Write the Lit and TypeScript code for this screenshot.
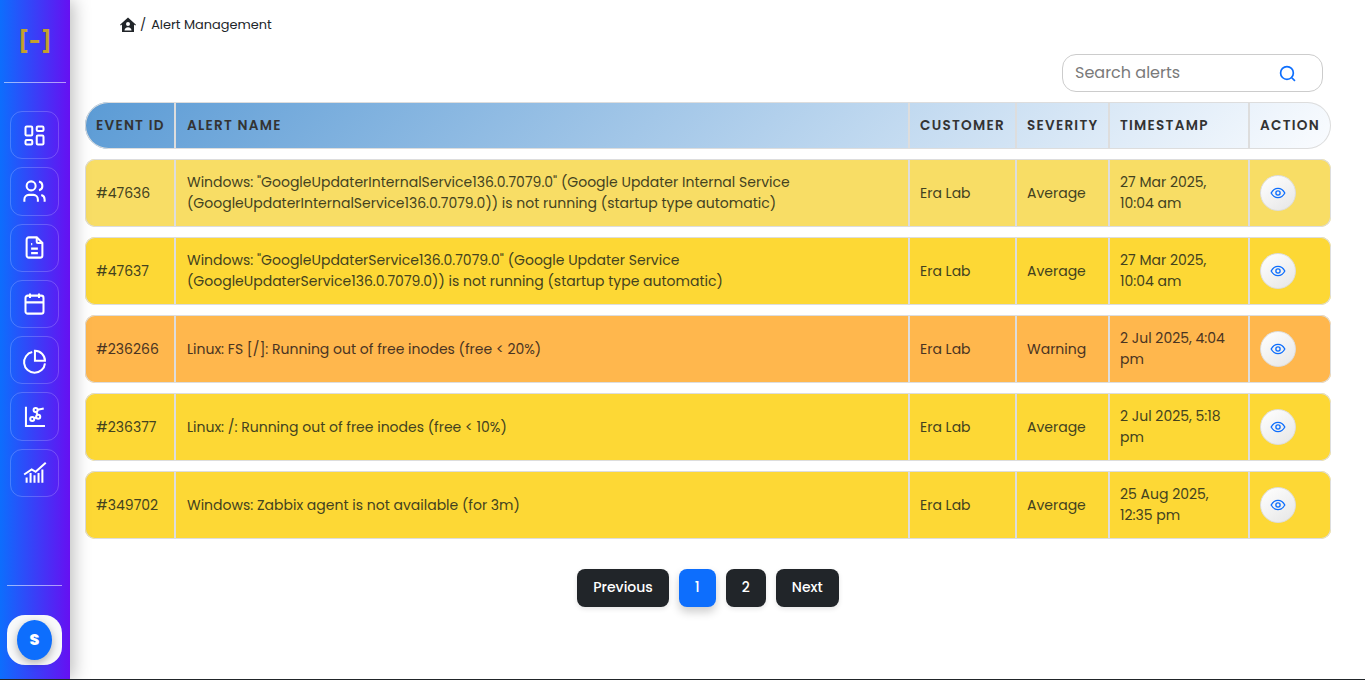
import { LitElement, html, css, svg } from "lit";
import { customElement } from "lit/decorators.js";

const navIcons = [
  svg`<path d="M5 4h4a1 1 0 0 1 1 1v6a1 1 0 0 1-1 1H5a1 1 0 0 1-1-1V5a1 1 0 0 1 1-1"/><path d="M5 16h4a1 1 0 0 1 1 1v2a1 1 0 0 1-1 1H5a1 1 0 0 1-1-1v-2a1 1 0 0 1 1-1"/><path d="M15 12h4a1 1 0 0 1 1 1v6a1 1 0 0 1-1 1h-4a1 1 0 0 1-1-1v-6a1 1 0 0 1 1-1"/><path d="M15 4h4a1 1 0 0 1 1 1v2a1 1 0 0 1-1 1h-4a1 1 0 0 1-1-1V5a1 1 0 0 1 1-1"/>`,
  svg`<circle cx="9" cy="7" r="4"/><path d="M3 21v-2a4 4 0 0 1 4-4h4a4 4 0 0 1 4 4v2"/><path d="M16 3.130a4 4 0 0 1 0 7.750"/><path d="M21 21v-2a4 4 0 0 0-3-3.850"/>`,
  svg`<path d="M14 3v4a1 1 0 0 0 1 1h4"/><path d="M17 21H7a2 2 0 0 1-2-2V5a2 2 0 0 1 2-2h7l5 5v11a2 2 0 0 1-2 2z"/><path d="M9 9h1M9 13h6M9 17h6"/>`,
  svg`<path d="M4 7a2 2 0 0 1 2-2h12a2 2 0 0 1 2 2v12a2 2 0 0 1-2 2H6a2 2 0 0 1-2-2V7z"/><path d="M16 3v4M8 3v4M4 11h16"/>`,
  svg`<path d="M10 4.500A9.300 9.300 0 1 0 21.300 14.500"/><path d="M12.400 3.400a8.800 8.800 0 0 1 8.900 8.800h-8.900z"/>`,
  svg`<path d="M4.400 3.300v17.100h16.900"/><circle cx="10" cy="14.200" r="1.800"/><circle cx="15.300" cy="12.200" r="1.800"/><circle cx="13" cy="6.300" r="1.800"/><path d="M11.700 13.600l1.900-.8M13.800 8l.8 2.500M14.800 6l5.400-1.200"/>`,
  svg`<path d="M2.800 13.800l6.700-4.500 3.500 2.100 9-8"/><path d="M5 21v-4.500M8.500 21v-8.500M12 21v-6.500M15.600 21v-8.500M19 21V9.300"/>`,
];

const eye = html`<svg class="eye" viewBox="0 0 24 24"><path d="M1.800 12S5.500 5 12 5s10.200 7 10.200 7-3.700 7-10.200 7S1.800 12 1.800 12z"/><circle cx="12" cy="12" r="3.200"/></svg>`;

type Row = { id: string; name: string; sev: string; time: string; tone: string };
const rows: Row[] = [
  { id: "#47636", name: 'Windows: "GoogleUpdaterInternalService136.0.7079.0" (Google Updater Internal Service (GoogleUpdaterInternalService136.0.7079.0)) is not running (startup type automatic)', sev: "Average", time: "27 Mar 2025, 10:04 am", tone: "pale" },
  { id: "#47637", name: 'Windows: "GoogleUpdaterService136.0.7079.0" (Google Updater Service (GoogleUpdaterService136.0.7079.0)) is not running (startup type automatic)', sev: "Average", time: "27 Mar 2025, 10:04 am", tone: "yellow" },
  { id: "#236266", name: "Linux: FS [/]: Running out of free inodes (free < 20%)", sev: "Warning", time: "2 Jul 2025, 4:04 pm", tone: "orange" },
  { id: "#236377", name: "Linux: /: Running out of free inodes (free < 10%)", sev: "Average", time: "2 Jul 2025, 5:18 pm", tone: "yellow" },
  { id: "#349702", name: "Windows: Zabbix agent is not available (for 3m)", sev: "Average", time: "25 Aug 2025, 12:35 pm", tone: "yellow" },
];

@customElement("app-root")
export class AppRoot extends LitElement {
  static styles = css`
    :host {
      display: flex;
      height: 680px;
      box-sizing: border-box;
      border-bottom: 1px solid #212529;
      overflow: hidden;
      background: #fff;
      color: #212529;
      font-family: "Poppins", "Inter", "Noto Sans", sans-serif;
    }
    * { box-sizing: border-box; }
    .side {
      width: 70px;
      flex: none;
      display: flex;
      flex-direction: column;
      align-items: center;
      background: linear-gradient(90deg, #0d6efd, #6610f2);
      box-shadow: 4px 0 16px rgba(0, 0, 0, .25);
      z-index: 1;
    }
    .logo {
      height: 83px;
      width: 62px;
      border-bottom: 1px solid rgba(255, 255, 255, .55);
      display: flex;
      align-items: center;
      justify-content: center;
      color: #c4a02c;
      font-weight: 700;
      font-size: 20.500px;
      letter-spacing: 0;
    }
    .nav {
      margin: 28px 1px 0 0;
      display: flex;
      flex-direction: column;
      gap: 8px;
    }
    .nav a {
      width: 49px;
      height: 48.250px;
      display: flex;
      align-items: center;
      justify-content: center;
      border: 1px solid rgba(255, 255, 255, .2);
      border-radius: 12px;
    }
    .nav svg {
      width: 27px;
      height: 27px;
      fill: none;
      stroke: #fff;
      stroke-width: 1.800;
    }
    .foot {
      margin: auto 1px 0 0;
      width: 55px;
      border-top: 1px solid rgba(255, 255, 255, .55);
      padding: 29px 0 14px;
    }
    .avatar-box {
      height: 50px;
      background: #f8f9fa;
      border-radius: 18px;
      display: flex;
      align-items: center;
      justify-content: center;
    }
    .avatar {
      width: 35px;
      height: 40px;
      padding-bottom: 2px;
      border-radius: 50%;
      background: #0d6efd;
      color: #fff;
      font-weight: 800;
      font-size: 16px;
      display: flex;
      align-items: center;
      justify-content: center;
      box-shadow: 0 3px 8px rgba(0, 0, 0, .3);
    }
    main {
      flex: 1;
      min-width: 0;
      padding: 15px 34px 0 15px;
      display: flex;
      flex-direction: column;
    }
    .crumb {
      display: flex;
      align-items: center;
      gap: 5px;
      height: 20px;
      padding-left: 35px;
      font-size: 12.900px;
      color: #212529;
    }
    .crumb svg { width: 16px; height: 15px; fill: #212529; margin: -2px -1px 0 0; }
    .searchbar {
      margin-top: 19px;
      display: flex;
      justify-content: flex-end;
      padding-right: 8px;
    }
    .search {
      width: 261px;
      height: 38px;
      border: 1px solid #ccc;
      border-radius: 14px;
      display: flex;
      align-items: center;
      justify-content: space-between;
      padding: 0 26px 2px 12px;
      font-size: 16px;
      color: #7a7a7a;
    }
    .search svg { width: 17px; height: 17px; fill: none; stroke: #0d6efd; stroke-width: 1.600; margin-top: 2px; }
    .table {
      margin-top: 10px;
      display: flex;
      flex-direction: column;
      gap: 10px;
    }
    .row {
      display: grid;
      grid-template-columns: 89px 734px 107px 93px 140px 83px;
      border-radius: 10px;
      box-shadow: 0 0 0 1px #ddd inset;
      height: 68px;
      font-size: 14px;
      color: #43421f;
      overflow: hidden;
    }
    .row > div {
      display: flex;
      align-items: center;
      padding: .5px 10px 0;
      line-height: 21.500px;
      border-left: 2px solid #ddd;
    }
    .row > div:first-child { border-left: 0; padding-left: 11px; }
    .row > div:nth-child(2) { padding-left: 11px; }
    .row.head {
      height: 47px;
      border-radius: 24px;
      background: linear-gradient(135deg, #5b9bd5, #fafcff);
      color: #333;
      font-size: 13.600px;
      font-weight: 600;
      letter-spacing: 1.250px;
      text-transform: uppercase;
      white-space: nowrap;
    }
    .pale { background: #f8dd65; }
    .yellow { background: #fdd835; }
    .orange { background: #ffb74d; color: #4a3422; }
    .view {
      width: 36px;
      height: 36px;
      flex: none;
      border-radius: 50%;
      border: 1px solid #ddd;
      background: linear-gradient(145deg, #fff, #e6e6e6);
      display: flex;
      align-items: center;
      justify-content: center;
    }
    .eye { width: 16px; height: 16px; fill: none; stroke: #0d6efd; stroke-width: 2; }
    .pager {
      margin-top: 30px;
      display: flex;
      justify-content: center;
      gap: 10px;
    }
    .pager span {
      height: 38px;
      padding: 0 16px 2px;
      border-radius: 8px;
      background: #212529;
      color: #fff;
      font-size: 14px;
      font-weight: 500;
      display: flex;
      align-items: center;
      box-shadow: 0 2px 5px rgba(0, 0, 0, .1);
    }
    .pager span.on {
      background: #0d6efd;
      box-shadow: 0 5px 10px rgba(0, 0, 0, .2);
    }
  `;

  render() {
    return html`
      <aside class="side">
        <div class="logo">[-]</div>
        <nav class="nav">
          ${navIcons.map((i) => html`<a><svg viewBox="0 0 24 24">${i}</svg></a>`)}
        </nav>
        <div class="foot">
          <div class="avatar-box"><div class="avatar">S</div></div>
        </div>
      </aside>
      <main>
        <div class="crumb">
          <svg viewBox="0 0 16 15"><path fill-rule="evenodd" d="M8 .5 16 7.700l-.8.900-1.200-1V15H2V7.600l-1.200 1L0 7.700zM8 5a2 2 0 1 0 0 4 2 2 0 0 0 0-4zM4.500 13.500h7c0-2-1.500-3.300-3.500-3.300s-3.500 1.300-3.500 3.300z"/></svg>
          <span>/</span>
          <span>Alert Management</span>
        </div>
        <div class="searchbar">
          <div class="search">
            <span>Search alerts</span>
            <svg viewBox="0 0 16 16"><circle cx="7.500" cy="7.500" r="6"/><path d="M12 12l3 3"/></svg>
          </div>
        </div>
        <div class="table">
          <div class="row head">
            <div>Event ID</div><div>Alert Name</div><div>Customer</div><div>Severity</div><div>Timestamp</div><div>Action</div>
          </div>
          ${rows.map(
            (r) => html`<div class="row ${r.tone}">
              <div>${r.id}</div><div><span>${r.name}</span></div><div>Era Lab</div><div>${r.sev}</div><div><span>${r.time}</span></div>
              <div><span class="view">${eye}</span></div>
            </div>`
          )}
        </div>
        <div class="pager">
          <span>Previous</span><span class="on">1</span><span>2</span><span>Next</span>
        </div>
      </main>
    `;
  }
}
